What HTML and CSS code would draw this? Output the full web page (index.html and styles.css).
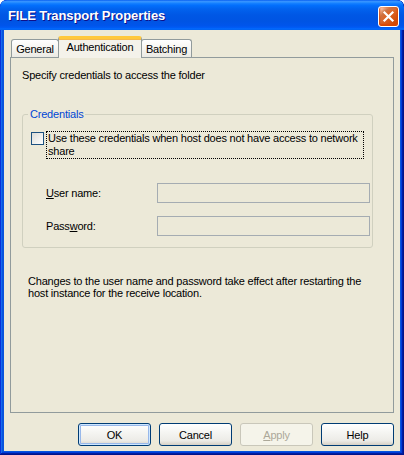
FILE: index.html
```html
<!DOCTYPE html>
<html>
<head>
<meta charset="utf-8">
<title>FILE Transport Properties</title>
<link rel="stylesheet" href="styles.css">
</head>
<body>
<div class="window">
  <div class="titlebar">
    <span class="title">FILE Transport Properties</span>
    <span class="close" aria-label="Close">
      <svg width="19" height="19" viewBox="0 0 19 19"><path d="M5.5 5.5 L13.5 13.5 M13.5 5.5 L5.5 13.5" stroke="#fff" stroke-width="2.2" stroke-linecap="square" fill="none"/></svg>
    </span>
  </div>
  <div class="client">
    <div class="tabs">
      <div class="tab tab-general">General</div>
      <div class="tab tab-active">Authentication</div>
      <div class="tab tab-batching">Batching</div>
    </div>
    <div class="panel">
      <p class="intro">Specify credentials to access the folder</p>
      <fieldset class="group">
        <legend>Credentials</legend>
        <div class="check-row">
          <span class="checkbox"></span>
          <span class="check-label">Use these credentials when host does not have access to network<br>share</span>
        </div>
        <div class="field-row first">
          <span class="field-label"><u>U</u>ser name:</span>
          <span class="input"></span>
        </div>
        <div class="field-row">
          <span class="field-label">Pass<u>w</u>ord:</span>
          <span class="input"></span>
        </div>
      </fieldset>
      <p class="note">Changes to the user name and password take effect after restarting the<br>host instance for the receive location.</p>
    </div>
    <div class="buttons">
      <span class="btn default">OK</span>
      <span class="btn">Cancel</span>
      <span class="btn disabled"><u>A</u>pply</span>
      <span class="btn">Help</span>
    </div>
  </div>
</div>
</body>
</html>
```
FILE: styles.css
```css
* { box-sizing: border-box; }
html, body { margin: 0; padding: 0; background: #ffffff; }
body {
  font-family: "Liberation Sans", Arial, sans-serif;
  font-size: 11px;
  letter-spacing: -0.2px;
  color: #000;
}
.window {
  width: 404px;
  height: 455px;
  display: flex;
  flex-direction: column;
  background: #0855dd;
  border-radius: 7px 7px 0 0;
  overflow: hidden;
  box-shadow: inset -1px -1px #00138c, inset 1px 1px #0831d9, inset -2px -2px #001ea0, inset 2px 2px #166aee, inset -3px -3px #003bda, inset 3px 3px #0855dd;
}
.titlebar {
  height: 30px;
  flex: none;
  display: flex;
  align-items: flex-start;
  justify-content: space-between;
  padding: 0 5px 0 8px;
  border-radius: 7px 7px 0 0;
  background: linear-gradient(to bottom, #0058ee 0%, #3a93ff 4%, #288eff 8%, #127dff 12%, #036ffc 18%, #0262ee 30%, #0057e5 50%, #0054e3 70%, #0055eb 85%, #005bf5 92%, #026afe 96%, #0062ef 100%);
}
.title {
  margin-top: 8px;
  font-family: "Liberation Sans", Arial, sans-serif;
  font-weight: bold;
  font-size: 13px;
  letter-spacing: -0.1px;
  line-height: 16px;
  color: #fff;
  text-shadow: 1px 1px #0f1089;
}
.close {
  margin-top: 6px;
  width: 21px;
  height: 21px;
  border: 1px solid #fff;
  border-radius: 3px;
  background: radial-gradient(circle at 90% 90%, #cc4600 0%, #dc6527 55%, #cd7546 70%, #ffccb2 90%, #ffffff 100%);
  box-shadow: inset 0 -1px 2px 1px #da4600;
  display: flex;
  align-items: center;
  justify-content: center;
}
.close svg { display: block; }
.client {
  flex: 1;
  margin: 0 4px 4px;
  background: #ece9d8;
  display: flex;
  flex-direction: column;
  padding: 6px 6px 5px 6px;
}
.tabs {
  display: flex;
  align-items: flex-end;
  height: 21px;
  flex: none;
  padding-left: 1px;
  position: relative;
  z-index: 1;
}
.tab {
  height: 18px;
  border: 1px solid #919b9c;
  border-bottom: 0;
  border-radius: 3px 3px 0 0;
  background: linear-gradient(#ffffff, #f4f3ee 60%, #ebeae4);
  display: flex;
  align-items: center;
  justify-content: center;
  padding-top: 1px;
  line-height: 13px;
  white-space: nowrap;
}
.tab-general { width: 48px; margin-right: -1px; }
.tab-batching { width: 51px; margin-left: -1px; }
.tab-active {
  width: 84px;
  height: 22px;
  margin-bottom: -1px;
  position: relative;
  z-index: 2;
  border-top: 3px solid #ffc83c;
  box-shadow: inset 0 1px 0 #f5b84a;
  background: #f4f2ea;
  padding-top: 0;
  padding-bottom: 3px;
}
.panel {
  flex: 1;
  border: 1px solid #919b9c;
  background: #ece9d8;
  padding: 11px 11px;
}
.intro {
  margin: 0;
  line-height: 13px;
}
.group {
  margin: 26px 9px 0 0;
  padding: 0 2px 11px 8px;
  border: 1px solid #d0d0bf;
  border-radius: 3px;
  min-width: 0;
}
.group legend {
  color: #0046d5;
  padding: 0 2px;
  margin-left: -3px;
  line-height: 13px;
}
.check-row {
  display: flex;
  align-items: flex-start;
  margin-top: 10px;
}
.checkbox {
  flex: none;
  width: 13px;
  height: 13px;
  margin-top: 1px;
  border: 1px solid #1c5180;
  background: linear-gradient(135deg, #dcdcd7, #ffffff);
}
.check-label {
  margin-left: 2px;
  width: 318px;
  border: 1px dotted #000;
  padding: 0 1px;
  line-height: 13px;
  white-space: nowrap;
}
.field-row {
  display: flex;
  align-items: center;
  height: 20px;
  padding-left: 15px;
  margin-top: 13px;
}
.field-row.first { margin-top: 24px; }
.field-label {
  width: 111px;
  flex: none;
}
.input {
  flex: 1;
  height: 20px;
  border: 1px solid #a5acb2;
  background: #ece9d8;
}
.note {
  margin: 27px 0 0 0;
  padding-left: 6px;
  line-height: 12px;
}
.buttons {
  flex: none;
  margin-top: 10px;
  display: flex;
  justify-content: flex-end;
  gap: 8px;
}
.btn {
  width: 73px;
  height: 23px;
  border: 1px solid #003c74;
  border-radius: 3px;
  background: linear-gradient(#ffffff 0%, #f5f5f2 40%, #ecebe6 80%, #d6d0c5 100%);
  display: flex;
  align-items: center;
  justify-content: center;
}
.btn.default {
  box-shadow: inset 0 0 0 1px #cee7ff, inset 0 0 0 2px #98b8ea;
}
.btn.disabled {
  border-color: #c9c7ba;
  background: #f5f4ea;
  color: #aca899;
}
```
